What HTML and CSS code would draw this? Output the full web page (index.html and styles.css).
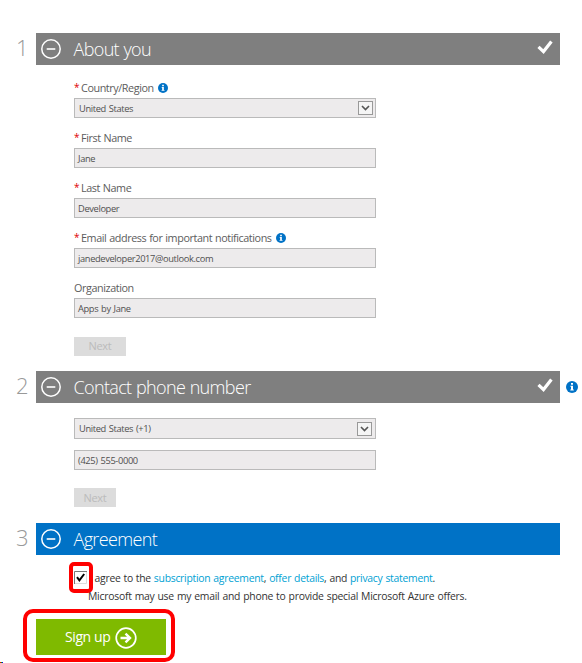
FILE: index.html
```html
<!DOCTYPE html>
<html lang="en">
<head>
<meta charset="utf-8">
<title>Sign up</title>
<link rel="stylesheet" href="styles.css">
</head>
<body>
<svg class="defs" width="0" height="0" aria-hidden="true">
  <symbol id="minus" viewBox="0 0 20 20"><circle cx="10" cy="10" r="9.2" fill="none" stroke="#fff" stroke-width="1.5"/><path d="M5.7 10h8.6" stroke="#fff" stroke-width="1.6"/></symbol>
  <symbol id="check" viewBox="0 0 16 14"><path d="M1.5 6.8 6.5 11.6 14.4 1.6" fill="none" stroke="#fff" stroke-width="3.2"/></symbol>
  <symbol id="info" viewBox="0 0 12 12"><circle cx="6" cy="6" r="6" fill="#0072c6"/><path d="M5 2.1h2v1.7H5zM4.4 4.8H7v3.6h.8v1H4.3v-1H5V5.7h-.6z" fill="#fff"/></symbol>
  <symbol id="arrow" viewBox="0 0 15 14"><rect x=".5" y=".5" width="14" height="13" fill="#f5f5f5" stroke="#999"/><path d="m4 5 3.5 3.6L11 5" fill="none" stroke="#555" stroke-width="1.6"/></symbol>
</svg>
<main class="page">
  <section class="step">
    <header class="row"><span class="num">1</span><div class="bar"><svg class="minus"><use href="#minus"/></svg><h2>About you</h2><svg class="check"><use href="#check"/></svg></div></header>
    <div class="form about">
      <div class="field"><div class="label"><b>*</b><span>Country/Region</span><svg class="info"><use href="#info"/></svg></div><div class="input select"><span>United States</span><svg class="arrow"><use href="#arrow"/></svg></div></div>
      <div class="field"><div class="label"><b>*</b><span>First Name</span></div><div class="input"><span>Jane</span></div></div>
      <div class="field"><div class="label"><b>*</b><span>Last Name</span></div><div class="input"><span>Developer</span></div></div>
      <div class="field"><div class="label"><b>*</b><span>Email address for important notifications</span><svg class="info"><use href="#info"/></svg></div><div class="input"><span>janedeveloper2017@outlook.com</span></div></div>
      <div class="field"><div class="label"><span>Organization</span></div><div class="input"><span>Apps by Jane</span></div></div>
      <div class="next wide">Next</div>
    </div>
  </section>
  <section class="step">
    <header class="row"><span class="num">2</span><div class="bar"><svg class="minus"><use href="#minus"/></svg><h2>Contact phone number</h2><svg class="check"><use href="#check"/></svg></div><svg class="info side"><use href="#info"/></svg></header>
    <div class="form phone">
      <div class="input select tall"><span>United States (+1)</span><svg class="arrow"><use href="#arrow"/></svg></div>
      <div class="input"><span>(425) 555-0000</span></div>
      <div class="next">Next</div>
    </div>
  </section>
  <section class="step">
    <header class="row"><span class="num">3</span><div class="bar blue"><svg class="minus"><use href="#minus"/></svg><h2>Agreement</h2></div></header>
    <div class="terms">
      <p class="agree"><span class="box"><svg width="13" height="13" viewBox="0 0 13 13"><path d="M.5 13V.5H13" fill="none" stroke="#777"/><path d="M12.5 1v11.5H1" fill="none" stroke="#ddd"/><path d="m3 6.2 2.4 3.1L10.2 3" fill="none" stroke="#000" stroke-width="2"/></svg></span>I agree to the <a>subscription agreement</a>, <a>offer details</a>, and <a>privacy statement</a>.</p>
      <p class="note">Microsoft may use my email and phone to provide special Microsoft Azure offers.</p>
    </div>
    <div class="callout"><div class="signup"><span>Sign up</span><svg width="22" height="22" viewBox="0 0 22 22"><circle cx="11" cy="11" r="9.8" fill="none" stroke="#fff" stroke-width="1.7"/><path d="M5.5 11h9M10.5 6.6l4.5 4.4-4.5 4.4" fill="none" stroke="#fff" stroke-width="2.4"/></svg></div></div>
  </section>
  <i class="corner"></i>
</main>
</body>
</html>
```

FILE: styles.css
```css
* { box-sizing: border-box; }
body { margin: 0; background: #fff; font-family: "Open Sans", "Noto Sans", sans-serif; color: #5c5c5c; }
h2, p { margin: 0; }
svg { display: block; flex: none; }
.defs { position: absolute; }
.page { position: relative; width: 582px; height: 663px; padding-top: 33px; overflow: hidden; }
.row { display: flex; align-items: center; height: 32px; }
.num { width: 36px; padding: 0 0 3px 16px; font-size: 22px; font-weight: 300; line-height: 29px; color: #999; }
.bar { display: flex; align-items: center; width: 524px; height: 32px; padding: 0 7px 0 5px; background: #7f7f7f; }
.blue { background: #0072c6; }
.minus { width: 20px; height: 20px; }
h2 { margin-left: 12.5px; font-size: 18px; font-weight: 300; line-height: 30px; letter-spacing: -0.65px; word-spacing: 0.5px; color: #fff; white-space: nowrap; }
.check { width: 16px; height: 14px; margin: 0 0 4px auto; }
.info { width: 10px; height: 10px; margin-left: 4px; }
.side { width: 12px; height: 12px; margin-left: 6px; }
.form { width: 376px; padding-left: 74px; }
.form .input { width: 302px; }
.about { height: 306px; padding-top: 15px; }
.field { height: 50px; }
.label { display: flex; align-items: center; height: 17px; margin-bottom: 1px; padding-bottom: 2px; font-size: 10.8px; line-height: 15px; letter-spacing: -0.42px; word-spacing: 0.5px; white-space: nowrap; }
.label b { width: 7px; color: #d00; font-size: 10px; font-weight: 400; }
.input { display: flex; align-items: center; justify-content: space-between; height: 20px; padding: 0 3px; border: 1px solid #bababa; background: #edebec; font-size: 9.3px; line-height: 14px; letter-spacing: -0.36px; word-spacing: 0.8px; color: #505050; white-space: nowrap; }
.input span { padding-top: 1px; }
.select { padding-left: 4px; padding-right: 2px; }
.arrow { width: 15px; height: 14px; }
.next { width: 42px; height: 19px; background: #dcdcdc; color: #bbb; font-size: 11px; line-height: 18px; letter-spacing: -0.3px; text-align: center; }
.wide { width: 52px; margin-top: 7px; }
.phone { height: 120px; padding-top: 15px; }
.phone .tall { height: 21px; margin-bottom: 11px; }
.tall .arrow { margin-right: 1px; }
.phone .next { margin-top: 18px; line-height: 19px; }
.terms { height: 54px; padding-top: 7px; color: #333; font-size: 10.4px; letter-spacing: -0.27px; word-spacing: 0.5px; white-space: nowrap; }
.agree { position: relative; height: 31px; padding-left: 89px; line-height: 32px; }
.box { position: absolute; left: 69px; top: 0; width: 24px; height: 31px; border: 4px solid #f00; border-radius: 5px; background: #fff; }
.box svg { margin: 5px 0 0 1px; }
a { color: #00a1d3; }
.note { margin-top: -5px; padding-left: 88px; line-height: 16px; letter-spacing: -0.24px; }
.callout { width: 152px; height: 53px; margin-left: 23px; border: 4px solid #f00; border-radius: 10px; padding: 6px 5px 0 9px; }
.signup { display: flex; align-items: center; width: 130px; height: 36px; padding-left: 29px; background: #7fba00; color: #fff; font-size: 14px; line-height: 22px; letter-spacing: -0.4px; white-space: nowrap; }
.signup svg { margin: 1px 0 0 5px; }
.corner { position: absolute; left: 0; bottom: 0; width: 3px; height: 1px; background: linear-gradient(90deg, #e00 1px, #0a0 1px 2px, #00e 2px); }
```
